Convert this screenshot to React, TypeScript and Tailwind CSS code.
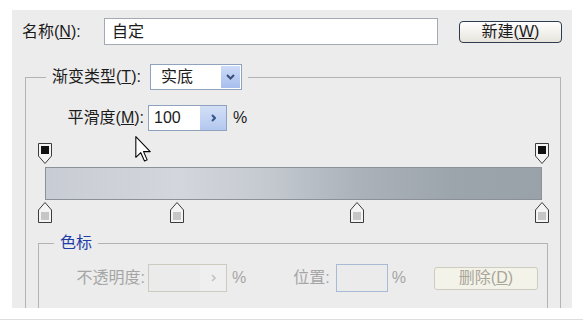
import React from 'react';

type Stop = { loc: number };

const topStops: Stop[] = [{ loc: 0 }, { loc: 100 }];
const bottomStops: Stop[] = [{ loc: 0 }, { loc: 26.6 }, { loc: 62.8 }, { loc: 100 }];

const TopStop = () => (
  <svg width="14" height="21" viewBox="0 0 14 21">
    <path d="M0.5 0.5H13.5V13L7 20.5L0.5 13Z" fill="#f4f4f4" stroke="#3c3c3c" />
    <rect x="3" y="3" width="8" height="8" fill="#111" />
  </svg>
);

const BottomStop = () => (
  <svg width="14" height="21" viewBox="0 0 14 21">
    <path d="M7 0.5L13.5 8V20.5H0.5V8Z" fill="#f4f4f4" stroke="#3c3c3c" />
    <rect x="3" y="10" width="8" height="8" fill="#c6c6c6" />
  </svg>
);

const Cursor = () => (
  <svg width="17" height="26" viewBox="0 0 12.5 19.5">
    <path d="M0.5 0.5V16L4.2 12.5L7 18.8L9 17.9L6.3 11.7H11.3Z" fill="#fff" stroke="#000" strokeWidth="0.8" strokeLinejoin="round" />
  </svg>
);

const App = () => {
  return (
    <div className="w-[583px] h-[320px] bg-white border-b border-[#dedede] pt-[10px] pl-[12px] font-['Liberation_Sans','Noto_Sans_CJK_SC',sans-serif] text-[16px] text-[#1b1b1b]">
      <div className="relative w-[560px] h-[298px] overflow-hidden bg-[#ececec]">
        {/* 名称 */}
        <div className="flex items-center pt-[8px] pl-[10px]">
          <span className="w-[82px]">名称(<u>N</u>):</span>
          <div className="w-[334px] h-[27px] border border-[#a3aab4] bg-white pl-[7px] flex items-center">自定</div>
          <button className="ml-[21px] w-[103px] h-[22px] rounded-[4px] border border-[#2e3c50] bg-gradient-to-b from-white to-[#e6e4dc] flex items-center justify-center leading-none">
            新建(<u>W</u>)
          </button>
        </div>

        <fieldset className="mt-[19px] ml-[13px] w-[536px] border border-[#b3b3b3] pb-[60px]">
          <legend className="ml-[20px] px-[6px]">
            <div className="flex items-center">
              <span className="w-[93px]">渐变类型(<u>T</u>):</span>
              <div className="ml-[5px] w-[92px] h-[26px] border border-[#8fa3bf] bg-white flex">
                <span className="flex-1 pl-[10px] flex items-center">实底</span>
                <span className="w-[19px] my-[1px] mr-[1px] bg-gradient-to-b from-[#cddbf6] to-[#a7bfee] flex items-center justify-center">
                  <svg width="9" height="6" viewBox="0 0 9 6">
                    <path d="M1 1L4.5 4.5L8 1" fill="none" stroke="#3b4f78" strokeWidth="2" />
                  </svg>
                </span>
              </div>
            </div>
          </legend>

          {/* 平滑度 */}
          <div className="flex items-center mt-[15px]">
            <span className="w-[118px] text-right">平滑度(<u>M</u>):</span>
            <div className="ml-[4px] w-[79px] h-[26px] border border-[#8fa3bf] bg-white flex">
              <span className="flex-1 pl-[5px] flex items-center">100</span>
              <span className="w-[26px] bg-gradient-to-b from-[#d3dff6] to-[#b3c8f0] flex items-center justify-center">
                <svg width="5" height="8" viewBox="0 0 5 8">
                  <path d="M1 1L4 4L1 7" fill="none" stroke="#34548a" strokeWidth="2" />
                </svg>
              </span>
            </div>
            <span className="ml-[6px]">%</span>
          </div>

          {/* gradient bar + stops */}
          <div className="ml-[19px] mt-[12px] w-[497px]">
            <div className="relative h-[21px]">
              {topStops.map((s, i) => (
                <div key={i} className="absolute top-0 -translate-x-1/2" style={{ left: `${s.loc}%` }}>
                  <TopStop />
                </div>
              ))}
            </div>
            <div className="mt-[3px] h-[33px] border border-[#8c9198] bg-[linear-gradient(to_right,#c8ccd4_0%,#d3d6dc_27%,#c4c9d0_45%,#abb2ba_63%,#9ca4ac_82%,#99a1a9_100%)]" />
            <div className="relative mt-[2px] h-[21px]">
              {bottomStops.map((s, i) => (
                <div key={i} className="absolute top-0 -translate-x-1/2" style={{ left: `${s.loc}%` }}>
                  <BottomStop />
                </div>
              ))}
            </div>
          </div>

          {/* 色标 */}
          <fieldset className="mt-[10px] ml-[12px] w-[510px] border border-[#b3b3b3] pb-[30px]">
            <legend className="ml-[15px] px-[6px] text-[#1e3ca8] leading-[20px]">色标</legend>
            <div className="flex items-center mt-[11px] text-[#a5a5a5]">
              <span className="w-[106px] text-right">不透明度:</span>
              <div className="ml-[3px] w-[79px] h-[28px] border border-[#cdcbc0] bg-[#ebebeb] flex justify-end">
                <span className="w-[26px] bg-[#efefef] flex items-center justify-center">
                  <svg width="5" height="8" viewBox="0 0 5 8">
                    <path d="M1 1L4 4L1 7" fill="none" stroke="#c4c4c4" strokeWidth="1.6" />
                  </svg>
                </span>
              </div>
              <span className="ml-[5px]">%</span>
              <span className="ml-[47px]">位置:</span>
              <div className="ml-[6px] w-[52px] h-[28px] border border-[#a9bbd4] bg-[#ebebeb]" />
              <span className="ml-[4px]">%</span>
              <button className="ml-[28px] w-[104px] h-[23px] rounded-[3px] border border-[#cecbbf] bg-[#f4f3e9] text-[#a9a69a] flex items-center justify-center leading-none">
                删除(<u>D</u>)
              </button>
            </div>
          </fieldset>
        </fieldset>

        <div className="absolute left-[123px] top-[126px]">
          <Cursor />
        </div>
      </div>
    </div>
  );
};

export default App;
